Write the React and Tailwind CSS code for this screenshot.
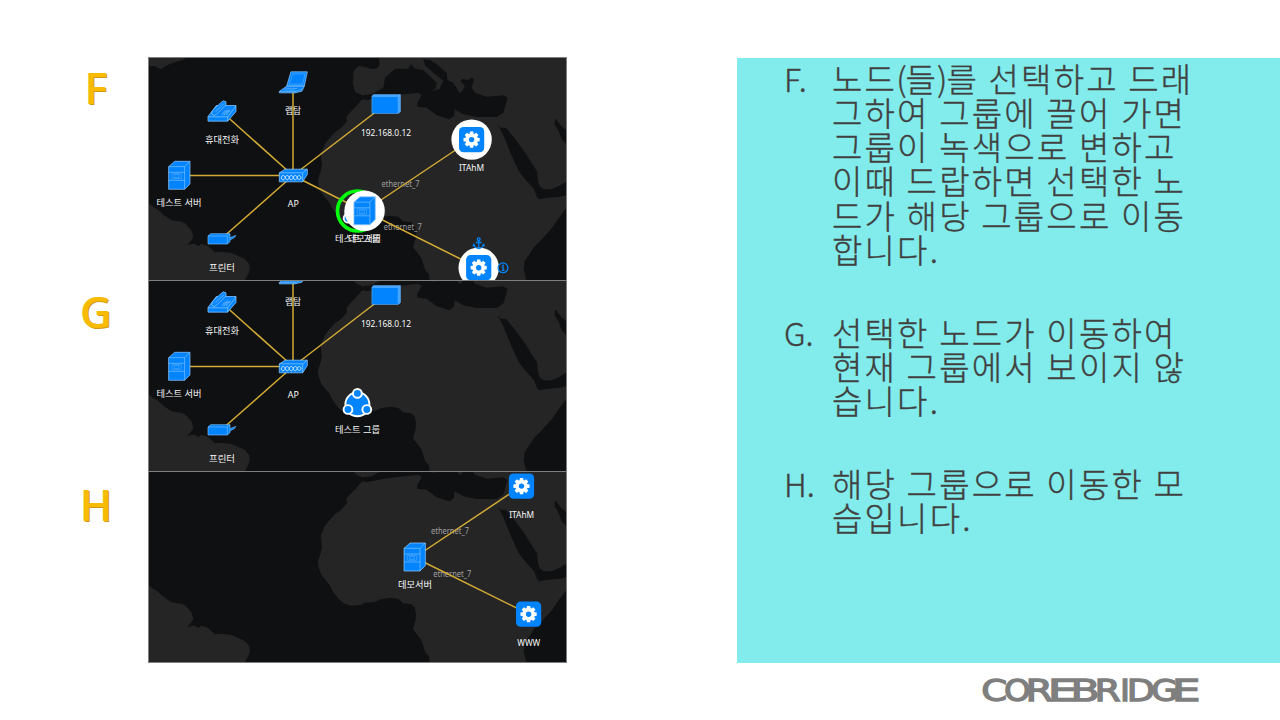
import React from "react";

const BLUE = "#0284ff";
const EDGE = "#8fc8ff";

function WorldMap() {
  return (
    <g>
      <rect x="0" y="0" width="420" height="230" fill="#0f1012" />
      <g transform="scale(0.33333)">
        <g fill="#252525">
          <path d="M0 0H118L104 9L84 14L60 23L38 37L22 28L0 26Z" />
          <path d="M0 438L12 447L28 457L45 472L70 490L100 494L113 500L130 520L136 540L128 553L116 565L128 562L140 560L152 567L160 560L180 566L200 586L222 584L250 588L290 605L304 622L305 636L302 648L290 672H0Z" />
          <path d="M694 0L694 27L684 35L671 36L650 29L631 27L620 38L616 47L616 62L614 77L621 104L632 110L641 113L646 127L640 130L622 150L600 173L595 180L597 193L580 212L560 226L545 243L530 262L518 291L522 323L519 340L510 367L511 383L520 408L545 438L556 460L575 483L590 494L610 500L638 498L650 491L680 489L700 480L730 476L752 480L765 493L790 496L800 505L804 525L803 543L795 571L820 603L832 640L843 652L847 700H1137L1133 660L1127 638L1130 613L1160 568L1180 548L1212 513L1230 487L1257 450V0Z" />
        </g>
        <path fill="#0f1012" d="M640 124L655 130L676 126L716 118L811 107L821 115L808 137L808 149L836 152L866 175L904 187L918 177L920 157L946 172L986 180L1046 180L1066 167L1079 122L1066 115L1016 119L981 107L971 92L978 67L971 62L958 70L944 65L938 72L951 87L941 105L934 107L916 77L898 69L896 47L866 22L846 9L826 7L831 25L856 47L886 71L874 97L851 102L864 92L866 77L826 39L801 35L789 22L781 35L741 35L711 62L706 92L671 112L646 114Z" />
        <path fill="#0f1012" d="M1049 202L1058 212L1074 212L1102 247L1132 287L1152 320L1167 342L1170 372L1175 388L1187 397L1210 397L1235 386L1257 372V414L1237 419L1200 422L1173 427L1167 420L1158 397L1128 363L1112 342L1087 287L1067 237Z" />
        <path fill="#0f1012" d="M1221 184L1229 193L1240 208L1257 220V263L1241 247L1232 222L1220 202Z" />
      </g>
    </g>
  );
}

function Label({ x, y, w, children, fill = "#f7f7f7", size = 9 }) {
  return (
    <text
      x={x - w / 2}
      y={y}
      textLength={w}
      lengthAdjust="spacingAndGlyphs"
      fontSize={size}
      fill={fill}
      fontFamily='"Noto Sans", "Noto Sans CJK KR", sans-serif'
    >
      {children}
    </text>
  );
}

function Link({ from, to }) {
  return <line x1={from[0]} y1={from[1]} x2={to[0]} y2={to[1]} stroke="#d2aa35" strokeWidth="1.5" />;
}

function Icon({ x, y, children }) {
  return (
    <g transform={`translate(${x} ${y}) scale(0.33333)`} fill={BLUE} stroke={EDGE} strokeWidth="2.2" strokeLinejoin="round">
      {children}
    </g>
  );
}

function Server({ x, y }) {
  return (
    <Icon x={x} y={y}>
      <path d="M-32 -26L-14 -42H32V26L16 42H-32Z" />
      <path d="M-32 -26H16V42M16 -26L32 -42M-32 -9H16M-32 15H16" fill="none" strokeWidth="1.8" />
      <rect x="-22" y="-5" width="28" height="15" strokeWidth="1.1" />
      <rect x="-15" y="-2" width="14" height="9" strokeWidth="1.1" />
    </Icon>
  );
}

function AccessPoint({ x, y }) {
  return (
    <Icon x={x} y={y}>
      <path d="M-42 -8L-24 -19H42V-3L28 19H-42Z" />
      <path d="M-42 -8H28V19M28 -8L42 -19" fill="none" />
      <path d="M-36 7C-36 -2 -26 -2 -24 6C-22 15 -14 15 -12 6C-10 -2 -2 -2 0 6C2 15 10 15 12 6C14 -2 22 -2 23 6C23 14 14 14 12 6C10 -2 2 -2 0 6C-2 15 -10 15 -12 6C-14 -2 -22 -2 -24 6C-26 15 -36 15 -36 7Z" fill="none" stroke="#e6f3ff" strokeWidth="2.6" />
    </Icon>
  );
}

function Laptop({ x, y }) {
  return (
    <Icon x={x} y={y}>
      <path d="M-7 -32H42L33 11H-20Z" />
      <path d="M-1 -26H35L28 5H-13Z" strokeWidth="1.2" />
      <path d="M-20 11H33L26 26L5 31H-42V27Z" />
      <path d="M-30 22L6 23M-25 17L12 18M-42 27H5L26 20M5 31V27" fill="none" strokeWidth="1.6" />
    </Icon>
  );
}

function Phone({ x, y }) {
  return (
    <Icon x={x} y={y}>
      <path d="M-42 15L-17 -18H42V0L17 29H-42Z" />
      <path d="M-42 16H17V29M17 16L42 -17" fill="none" />
      <path d="M-31 8L-29 -2L-4 -26L4 -32L12 -29L12 -20L-16 8L-24 12Z" />
      <path d="M-24 3L5 -26M-18 0L8 -24M4 4H20M0 8H17M8 0H24M12 -4H27M10 -4L-1 10M17 -4L6 10M24 -4L13 10" fill="none" strokeWidth="1.3" />
    </Icon>
  );
}

function Printer({ x, y }) {
  return (
    <Icon x={x} y={y}>
      <path d="M18 -2L42 -11L37 -4L20 5Z" strokeWidth="1.4" />
      <path d="M-42 -9L-34 -16H24L24 8L16 15H-42Z" strokeWidth="1.8" />
      <path d="M-42 -9H16V15M16 -9L24 -16" fill="none" strokeWidth="1.6" />
    </Icon>
  );
}

function Box({ x, y }) {
  return (
    <Icon x={x} y={y}>
      <path d="M-42 -23L-38 -28H43V23L37 28H-42Z" fill="#46a4ff" stroke="#5fb0ff" />
      <path d="M-41 -21H35V27H-41Z" stroke="none" />
      <path d="M37 -23L43 -28" fill="none" strokeWidth="1.6" />
    </Icon>
  );
}

const TEETH = [0, 45, 90, 135, 180, 225, 270, 315];

function Gear({ x, y, selected }) {
  return (
    <g transform={`translate(${x} ${y})`}>
      {selected && <circle r="20.2" fill="#fff" />}
      <rect x="-12.6" y="-12.6" width="25.2" height="25.2" rx="4.5" fill={BLUE} />
      {TEETH.map((a) => (
        <path key={a} d="M-2.2 -5L-1.6 -8.1H1.6L2.2 -5Z" fill="#fff" transform={`rotate(${a})`} />
      ))}
      <circle r="4.4" fill="none" stroke="#fff" strokeWidth="3.4" />
    </g>
  );
}

function Group({ x, y }) {
  return (
    <g transform={`translate(${x} ${y})`} fill={BLUE} stroke="#fff">
      <circle r="12" strokeWidth="1.9" />
      <circle cy="-10.9" r="4.4" strokeWidth="1.9" />
      <circle cx="-9.4" cy="5.2" r="4.4" strokeWidth="1.9" />
      <circle cx="9.4" cy="5.2" r="4.4" strokeWidth="1.9" />
    </g>
  );
}

function Anchor({ x, y }) {
  return (
    <g transform={`translate(${x} ${y})`} fill="none" stroke={BLUE} strokeWidth="1.3">
      <circle cy="-4" r="1.4" />
      <path d="M0 -2.6V5M-3 -0.8H3M-5 1.2C-4.6 4 -2.5 5 0 5.2C2.5 5 4.6 4 5 1.2M-5.6 3L-5 1.2L-3.4 2.6M5.6 3L5 1.2L3.4 2.6" />
    </g>
  );
}

function Info({ x, y }) {
  return (
    <g transform={`translate(${x} ${y})`}>
      <circle r="4.9" fill="none" stroke={BLUE} strokeWidth="1.3" />
      <path d="M-1.3 -0.6H0.2V2.5M-1.4 2.6H1.6" stroke={BLUE} strokeWidth="1.2" fill="none" />
      <circle cx="0" cy="-2.4" r="0.9" fill={BLUE} />
    </g>
  );
}

const AP = [145, 118.5];

function OfficeNetwork() {
  return (
    <g>
      <Label x={145} y={56.5} w={16}>랩탑</Label>
      <Label x={74} y={85.5} w={34}>휴대전화</Label>
      <Label x={31} y={149} w={45}>테스트 서버</Label>
      <Label x={145.3} y={149.5} w={11}>AP</Label>
      <Label x={74} y={213.5} w={26}>프린터</Label>
      <Label x={238} y={78.5} w={50}>192.168.0.12</Label>
      <Link from={[74, 55]} to={AP} />
      <Link from={[145, 35]} to={AP} />
      <Link from={[31, 118.5]} to={AP} />
      <Link from={[73, 182]} to={AP} />
      <Link from={[238, 47]} to={AP} />
      <Phone x={74} y={54.5} />
      <Laptop x={145.3} y={25.5} />
      <Server x={31.3} y={118.3} />
      <Printer x={74} y={182} />
      <Box x={238} y={47} />
    </g>
  );
}

function Scene({ viewBox, className, children }) {
  return (
    <div className="border-t border-[#7f7f7f]">
      <svg viewBox={viewBox} className={className}>
        <WorldMap />
        {children}
      </svg>
    </div>
  );
}

function Screens() {
  return (
    <div className="w-[419px] shrink-0 border-x border-b border-[#7f7f7f]">
      <Scene viewBox="1 1 417 222" className="block h-[222px] w-[417px]">
        <Label x={209.5} y={185} w={45}>테스트 그룹</Label>
        <Label x={216.5} y={185} w={33}>데모서버</Label>
        <Label x={252.5} y={130} w={38} fill="#a0a0a0">ethernet_7</Label>
        <Label x={254.7} y={172.5} w={38} fill="#a0a0a0">ethernet_7</Label>
        <Link from={AP} to={[209.5, 151]} />
        <Link from={[216.5, 154]} to={[323.3, 82.5]} />
        <Link from={[216.5, 154]} to={[330.7, 211]} />
        <OfficeNetwork />
        <AccessPoint x={145.3} y={118.5} />
        <Group x={209.5} y={156} />
        <circle cx="209.5" cy="154" r="20" fill="none" stroke="#00ff0d" strokeWidth="3.6" />
        <circle cx="216.6" cy="153.8" r="20.2" fill="#fff" />
        <Server x={216.6} y={153.8} />
        <Label x={323.5} y={114} w={25}>ITAhM</Label>
        <Gear x={323.6} y={82.6} selected />
        <Gear x={330.7} y={210.7} selected />
        <Anchor x={330.7} y={186.3} />
        <Info x={355} y={210.8} />
      </Scene>
      <Scene viewBox="1 33 417 190" className="block h-[190px] w-[417px]">
        <OfficeNetwork />
        <AccessPoint x={145.3} y={118.5} />
        <Group x={209.4} y={156.3} />
        <Label x={209.5} y={185} w={45}>테스트 그룹</Label>
      </Scene>
      <Scene viewBox="1 33 417 190" className="block h-[190px] w-[417px]">
        <Label x={302} y={95} w={38} fill="#a0a0a0">ethernet_7</Label>
        <Label x={304.3} y={137.5} w={38} fill="#a0a0a0">ethernet_7</Label>
        <Link from={[266.5, 118.5]} to={[373.5, 47]} />
        <Link from={[266.5, 118.5]} to={[380.7, 175]} />
        <Server x={266.7} y={118} />
        <Label x={267} y={149} w={34}>데모서버</Label>
        <Gear x={373.5} y={47.1} />
        <Label x={373.7} y={78.5} w={25}>ITAhM</Label>
        <Gear x={380.6} y={175.2} />
        <Label x={380.8} y={206.5} w={23}>WWW</Label>
      </Scene>
    </div>
  );
}

function StepLetter({ children }) {
  return (
    <div className="text-center font-['Noto_Sans','Open_Sans',sans-serif] text-[43px] leading-[61px] font-medium text-[#f9bb00] [text-shadow:1px_0.5px_0_#cf9a12,-0.5px_-0.5px_0_#ead07a]">
      {children}
    </div>
  );
}

const NOTES = [
  {
    mark: "F.",
    lines: [
      ["노드", "(", "들", ")", "를 선택하고 드래"],
      ["그하여 그룹에 끌어 가면"],
      ["그룹이 녹색으로 변하고"],
      ["이때 드랍하면 선택한 노"],
      ["드가 해당 그룹으로 이동"],
      ["합니다."],
    ],
  },
  { mark: "G.", lines: [["선택한 노드가 이동하여"], ["현재 그룹에서 보이지 않"], ["습니다."]] },
  { mark: "H.", lines: [["해당 그룹으로 이동한 모"], ["습입니다."]] },
];

function NoteLine({ parts }) {
  return (
    <p>
      {parts.map((part) =>
        part === "(" || part === ")" ? (
          <span key={part} className="-ml-[1px] tracking-[-1px]">
            {part}
          </span>
        ) : (
          part
        )
      )}
    </p>
  );
}

const WORDMARK = [
  ["C", 3, 25.5, 0.056, 0.588, 0.698],
  ["O", 25.5, 49, 0.056, 0.675, 0.787],
  ["R", 49, 72, 0.098, 0.568, 0.695],
  ["E", 72, 94.5, 0.098, 0.47, 0.632],
  ["B", 94.5, 117.5, 0.098, 0.525, 0.686],
  ["R", 118, 140, 0.098, 0.568, 0.695],
  ["I", 143, 147, 0.098, 0.1, 0.295],
  ["D", 150, 173, 0.098, 0.613, 0.77],
  ["G", 173, 195.5, 0.056, 0.637, 0.775],
  ["E", 196, 218, 0.098, 0.47, 0.632],
];

function Wordmark() {
  return (
    <svg viewBox="0 0 222 40" className="h-[40px] w-[222px]">
      <text y="26.6" fontFamily='"DejaVu Sans", sans-serif' fontSize="30" fill="#7f7f7f" stroke="#7f7f7f" strokeWidth="1.3">
        {WORDMARK.map(([letter, left, right, bearing, ink, advance], i) => {
          const unit = (right - left - 0.6) / ink;
          return (
            <tspan key={i} x={left + 0.3 - bearing * unit} textLength={advance * unit} lengthAdjust="spacingAndGlyphs">
              {letter}
            </tspan>
          );
        })}
      </text>
    </svg>
  );
}

export default function App() {
  return (
    <div className="flex h-[720px] w-[1280px] flex-col overflow-hidden bg-white">
      <main className="flex pt-[57px]">
        <div className="flex w-[148px] flex-col pl-[44px]">
          <div className="h-[224px] w-[104px]">
            <StepLetter>F</StepLetter>
          </div>
          <div className="h-[193px] w-[104px]">
            <StepLetter>G</StepLetter>
          </div>
          <StepLetter>H</StepLetter>
        </div>
        <Screens />
        <section className="mt-px ml-[170px] flex h-[605px] w-[543px] flex-col gap-[48.4px] bg-[#81eceb] pt-[2.5px] pl-[47px] font-['Noto_Sans_CJK_KR',sans-serif] text-[33px] leading-[34.3px] font-light tracking-[2.2px] text-[#404040] [-webkit-text-stroke:0.35px_#404040]">
          {NOTES.map((note) => (
            <div key={note.mark} className="flex">
              <span className="w-[48px] shrink-0 text-[32px] tracking-normal">{note.mark}</span>
              <div className="whitespace-nowrap">
                {note.lines.map((parts) => (
                  <NoteLine key={parts.join("")} parts={parts} />
                ))}
              </div>
            </div>
          ))}
        </section>
      </main>
      <footer className="flex pt-[11px] pl-[980px]">
        <Wordmark />
      </footer>
    </div>
  );
}
